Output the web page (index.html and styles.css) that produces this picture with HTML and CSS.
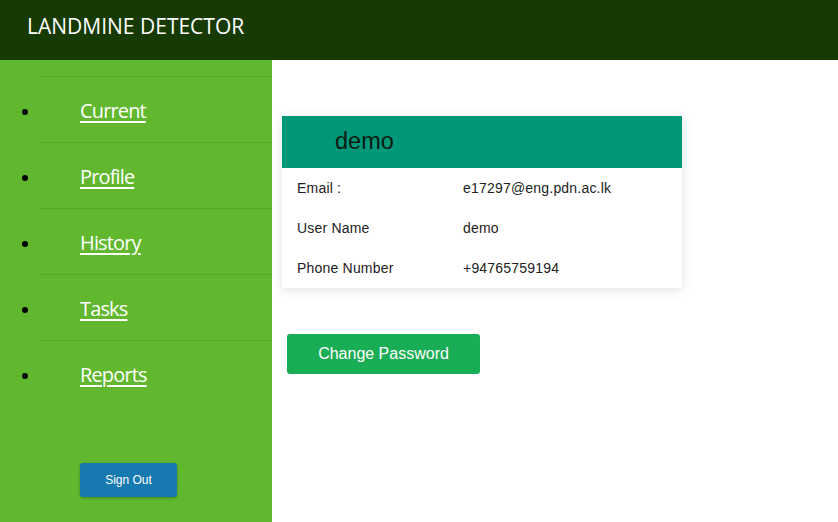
FILE: index.html
```
<!DOCTYPE html>
<html>
<head>
<meta charset="utf-8">
<link rel="stylesheet" href="styles.css">
</head>
<body>
<header class="topbar">
  <div class="brand">LANDMINE DETECTOR</div>
</header>
<div class="layout">
  <nav class="sidebar">
    <ul class="menu">
      <li><a href="#">Current</a></li>
      <li><a href="#">Profile</a></li>
      <li><a href="#">History</a></li>
      <li><a href="#">Tasks</a></li>
      <li><a href="#">Reports</a></li>
    </ul>
    <button class="signout">Sign Out</button>
  </nav>
  <main class="content">
    <section class="card">
      <div class="card-head">demo</div>
      <div class="card-body">
        <div class="row"><span class="label">Email :</span><span class="value">e17297@eng.pdn.ac.lk</span></div>
        <div class="row"><span class="label">User Name</span><span class="value">demo</span></div>
        <div class="row"><span class="label">Phone Number</span><span class="value">+94765759194</span></div>
      </div>
    </section>
    <button class="change">Change Password</button>
  </main>
</div>
</body>
</html>
```
FILE: styles.css
```
html, body {
  margin: 0;
  padding: 0;
  height: 100%;
}
body {
  font-family: "Open Sans", "Noto Sans", sans-serif;
  overflow: hidden;
}
.topbar {
  height: 60px;
  background: #173a03;
  display: flex;
  align-items: center;
  padding-left: 27px;
}
.brand {
  color: #ffffff;
  font-size: 21px;
  letter-spacing: 0;
  margin-top: -8px;
}
.layout {
  display: flex;
  height: 462px;
}
.sidebar {
  width: 272px;
  background: #61b82e;
  display: flex;
  flex-direction: column;
}
.menu {
  margin: 16px 0 0 0;
  padding-left: 40px;
}
.menu li {
  border-top: 1px solid #55a628;
  height: 65px;
  display: flex;
  align-items: center;
  list-style: none;
  position: relative;
}
.menu li::before {
  content: "";
  position: absolute;
  left: -18px;
  top: 32px;
  width: 6px;
  height: 6px;
  border-radius: 50%;
  background: #000;
}
.menu a {
  color: #ffffff;
  font-size: 20px;
  padding-left: 40px;
  text-decoration: underline;
  text-underline-offset: 3px;
  letter-spacing: -0.85px;
  margin-top: 2px;
}
.signout {
  margin: 57px 0 0 80px;
  width: 97px;
  height: 34px;
  background: #1679b0;
  color: #ffffff;
  border: none;
  border-radius: 3px;
  box-shadow: 0 1px 3px rgba(0,0,0,0.3);
  font-family: "Liberation Sans", Arial, sans-serif;
  font-size: 12px;
}
.content {
  flex: 1;
  background: #ffffff;
  padding: 56px 0 0 10px;
  font-family: "Liberation Sans", Arial, sans-serif;
}
.card {
  width: 400px;
  box-shadow: 0 2px 10px rgba(0,0,0,0.12);
}
.card-head {
  height: 52px;
  background: #009877;
  color: #0e1a14;
  font-size: 23.5px;
  display: flex;
  align-items: center;
  padding-left: 53px;
  padding-bottom: 1px;
  box-sizing: border-box;
}
.card-body {
  display: flex;
  flex-direction: column;
}
.row {
  height: 40px;
  display: grid;
  grid-template-columns: 166px 1fr;
  align-items: center;
  padding-left: 15px;
  font-size: 14px;
  letter-spacing: 0.2px;
  color: #222;
}
.row .label {
  margin-top: -1px;
}
.change {
  margin: 46px 0 0 5px;
  width: 193px;
  height: 40px;
  background: #19ad55;
  color: #ffffff;
  border: none;
  border-radius: 3px;
  font-family: "Liberation Sans", Arial, sans-serif;
  font-size: 16px;
}
```
